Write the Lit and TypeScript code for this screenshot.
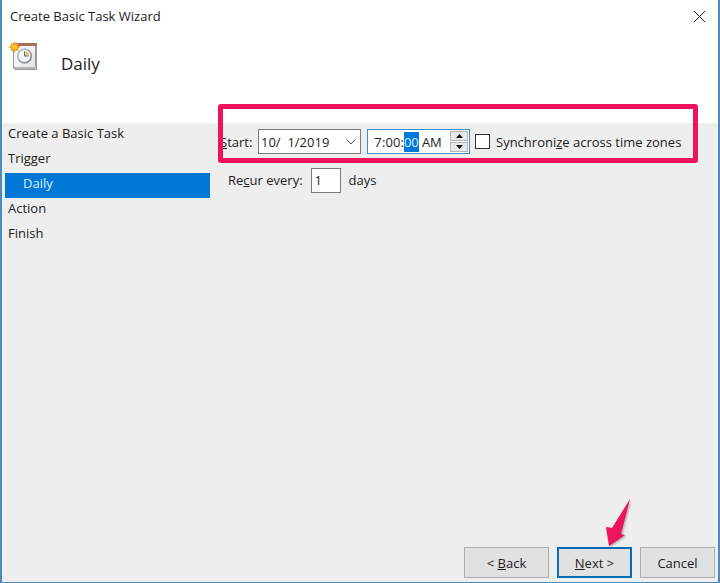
import { LitElement, html, css, svg } from "lit";
import { customElement, state } from "lit/decorators.js";
import { classMap } from "lit/directives/class-map.js";

interface Step {
  label: string;
  nested?: boolean;
}

const STEPS: Step[] = [
  { label: "Create a Basic Task" },
  { label: "Trigger" },
  { label: "Daily", nested: true },
  { label: "Action" },
  { label: "Finish" },
];

const taskIcon = html`<svg class="task-icon" viewBox="0 0 30 30" aria-hidden="true">
  <defs>
    <linearGradient id="page" x1="0" y1="0" x2="1" y2="1">
      <stop offset="0" stop-color="#fff" />
      <stop offset="1" stop-color="#e4e4e8" />
    </linearGradient>
    <linearGradient id="rim" x1="0" y1="0" x2="1" y2="1">
      <stop offset="0" stop-color="#c4ccd4" />
      <stop offset="1" stop-color="#7f8890" />
    </linearGradient>
  </defs>
  <path d="M4 3H28V29H6L4 27Z" fill="#9a9a9c" />
  <path d="M5 5H26V26H5Z" fill="url(#page)" />
  <path d="M6 27H27" stroke="#d0d0d2" />
  <path d="M4 2H28V5H4Z" fill="#a5705a" />
  <circle cx="15.500" cy="15" r="6.800" fill="#f3f7fa" stroke="url(#rim)" stroke-width="1.800" />
  <path d="M15.500 15V10A5 5 0 0 1 20 15Z" fill="#f0c765" />
  <path d="M15.500 10.500V15H19.500" fill="none" stroke="#5c6f84" />
  <path d="M5.500 0 6.800 3.200 9.800 1.600 8.700 4.800 12 6 8.700 7.400 9.900 10.500 6.800 9.200 5.500 12.300 4.200 9.200 1.200 10.500 2.300 7.400 -.8 6 2.300 4.800 1.200 1.600 4.200 3.200Z" fill="#f5a11c" />
  <circle cx="5.500" cy="6" r="2.400" fill="#ffc63c" />
</svg>`;

const triangle = (up: boolean) => html`<svg class="triangle" viewBox="0 0 7 4" aria-hidden="true">
  ${up ? svg`<path d="M0 4 3.500 0 7 4Z" />` : svg`<path d="M0 0 3.500 4 7 0Z" />`}
</svg>`;

@customElement("app-root")
export class AppRoot extends LitElement {
  static styles = css`
    :host {
      display: block;
      font: 13px/20px "Open Sans", "Noto Sans", sans-serif;
      color: #1c1c1c;
    }
    * {
      box-sizing: border-box;
    }
    button,
    input {
      margin: 0;
      padding: 0;
      font: inherit;
      color: inherit;
      border-radius: 0;
    }
    .window {
      display: flex;
      flex-direction: column;
      min-height: 100vh;
      background: #eee;
      border: solid #4a8cba;
      border-width: 0 2px 1px;
    }
    .header {
      background: #fff;
      height: 123px;
    }
    .title-bar {
      display: flex;
      align-items: center;
      justify-content: space-between;
      height: 32px;
      padding: 0 12px 0 8px;
    }
    .close {
      display: flex;
      background: none;
      border: 0;
    }
    .close svg {
      width: 13px;
      height: 13px;
      stroke: #222;
    }
    .heading {
      display: flex;
      align-items: center;
      gap: 22px;
      padding: 8px 7px;
    }
    .task-icon {
      width: 30px;
      height: 30px;
      overflow: visible;
    }
    h1 {
      margin: 0;
      padding-top: 16px;
      font-size: 17px;
      line-height: 16px;
      font-weight: 400;
    }
    .body {
      flex: 1;
      display: grid;
      grid-template-columns: 208px 1fr;
      gap: 10px;
    }
    .steps {
      list-style: none;
      margin: 0;
      padding: 0 0 0 3px;
    }
    .step {
      height: 25px;
      padding-left: 3px;
    }
    .step.nested {
      padding-left: 18px;
    }
    .step.current {
      background: #0078d7;
      color: #d9f2ff;
    }
    .row {
      display: flex;
      align-items: center;
    }
    .start {
      position: relative;
      height: 37px;
    }
    .callout {
      position: absolute;
      inset: -19px 20px -3px -2px;
      border: 5px solid #ed145b;
      border-radius: 3px;
      pointer-events: none;
    }
    .start-label {
      width: 38px;
    }
    .field {
      display: flex;
      align-items: center;
      height: 25px;
      background: #fff;
      border: 1px solid #7a7a7a;
    }
    .date {
      width: 103px;
      margin-right: 6px;
      padding: 0 4px 0 2px;
    }
    .date input {
      flex: 1;
      min-width: 0;
      border: 0;
      background: none;
    }
    .drop {
      display: flex;
      border: 0;
      background: none;
    }
    .drop svg {
      width: 10px;
      height: 6px;
      fill: none;
      stroke: #555;
    }
    .time {
      width: 103px;
      margin-right: 5px;
      padding: 0 1px 0 6px;
      border-color: #3c8fc0;
    }
    .part {
      width: 15px;
      height: 20px;
      border: 0;
      background: none;
      text-align: center;
    }
    .part.hour {
      width: 8px;
    }
    .part.meridiem {
      width: 22px;
      margin-left: 2px;
    }
    .part.selected {
      background: #0078d7;
      color: #d9f2ff;
    }
    .spin {
      display: flex;
      flex-direction: column;
      gap: 1px;
      margin-left: auto;
    }
    .spin button {
      display: grid;
      place-items: center;
      width: 18px;
      height: 10px;
      background: #e8e8e8;
      border: 1px solid #b4b4b4;
    }
    .triangle {
      width: 7px;
      height: 4px;
      fill: #111;
    }
    .check {
      appearance: none;
      width: 15px;
      height: 15px;
      margin-right: 6px;
      background: #fff;
      border: 1px solid #333;
    }
    .check:checked {
      background: #0078d7;
    }
    .recur {
      height: 40px;
      padding-left: 8px;
      gap: 8px;
    }
    .count {
      width: 30px;
      height: 25px;
      padding-left: 3px;
      background: #fff;
      border: 1px solid #7a7a7a;
    }
    .footer {
      display: flex;
      justify-content: flex-end;
      gap: 8px;
      padding: 0 3px 4px;
    }
    .action {
      width: 75px;
      height: 31px;
      background: #e1e1e1;
      border: 1px solid #adadad;
    }
    .action.back {
      width: 85px;
    }
    .action.next {
      position: relative;
      border: 2px solid #0a6cb4;
    }
    .pointer {
      position: absolute;
      right: -2px;
      bottom: 29px;
      width: 28px;
      height: 50px;
      fill: #ed145b;
      filter: drop-shadow(1px 1px 1px #0005);
      pointer-events: none;
    }
  `;

  @state() private date = "10/  1/2019";
  @state() private sync = false;

  render() {
    return html`<div class="window">
      <header class="header">
        <div class="title-bar">
          <span>Create Basic Task Wizard</span>
          <button class="close" aria-label="Close">
            <svg viewBox="0 0 13 13"><path d="M1 1 12 12M12 1 1 12" /></svg>
          </button>
        </div>
        <div class="heading">${taskIcon}<h1>Daily</h1></div>
      </header>
      <main class="body">
        <ol class="steps">
          ${STEPS.map(
            (s) => html`<li class=${classMap({ step: true, nested: !!s.nested, current: !!s.nested })}>${s.label}</li>`,
          )}
        </ol>
        <form>
          <div class="row start">
            <label class="start-label" for="date"><u>S</u>tart:</label>
            <div class="field date">
              <input id="date" type="text" .value=${this.date} />
              <button class="drop" type="button" aria-label="Open calendar">
                <svg viewBox="0 0 10 6"><path d="M.5 .5 5 5 9.500 .5" /></svg>
              </button>
            </div>
            <div class="field time" role="group" aria-label="Start time">
              <input class="part hour" aria-label="Hour" value="7" />:<input
                class="part"
                aria-label="Minutes"
                value="00"
              />:<input class="part selected" aria-label="Seconds" value="00" />
              <input class="part meridiem" aria-label="AM or PM" value="AM" />
              <div class="spin">
                <button type="button" aria-label="Increase">${triangle(true)}</button>
                <button type="button" aria-label="Decrease">${triangle(false)}</button>
              </div>
            </div>
            <input
              class="check"
              id="sync"
              type="checkbox"
              .checked=${this.sync}
              @change=${(e: Event) => (this.sync = (e.target as HTMLInputElement).checked)}
            />
            <label for="sync">Synchroni<u>z</u>e across time zones</label>
            <div class="callout"></div>
          </div>
          <div class="row recur">
            <label for="count">Re<u>c</u>ur every:</label>
            <input class="count" id="count" type="text" value="1" />
            <span>days</span>
          </div>
        </form>
      </main>
      <footer class="footer">
        <button class="action back">&lt; <u>B</u>ack</button>
        <button class="action next">
          <u>N</u>ext &gt;
          <svg class="pointer" viewBox="0 0 28 50" aria-hidden="true">
            <path d="M26 2 17 37 21 38 5 49 2 30 8 31Z" />
          </svg>
        </button>
        <button class="action">Cancel</button>
      </footer>
    </div>`;
  }
}
